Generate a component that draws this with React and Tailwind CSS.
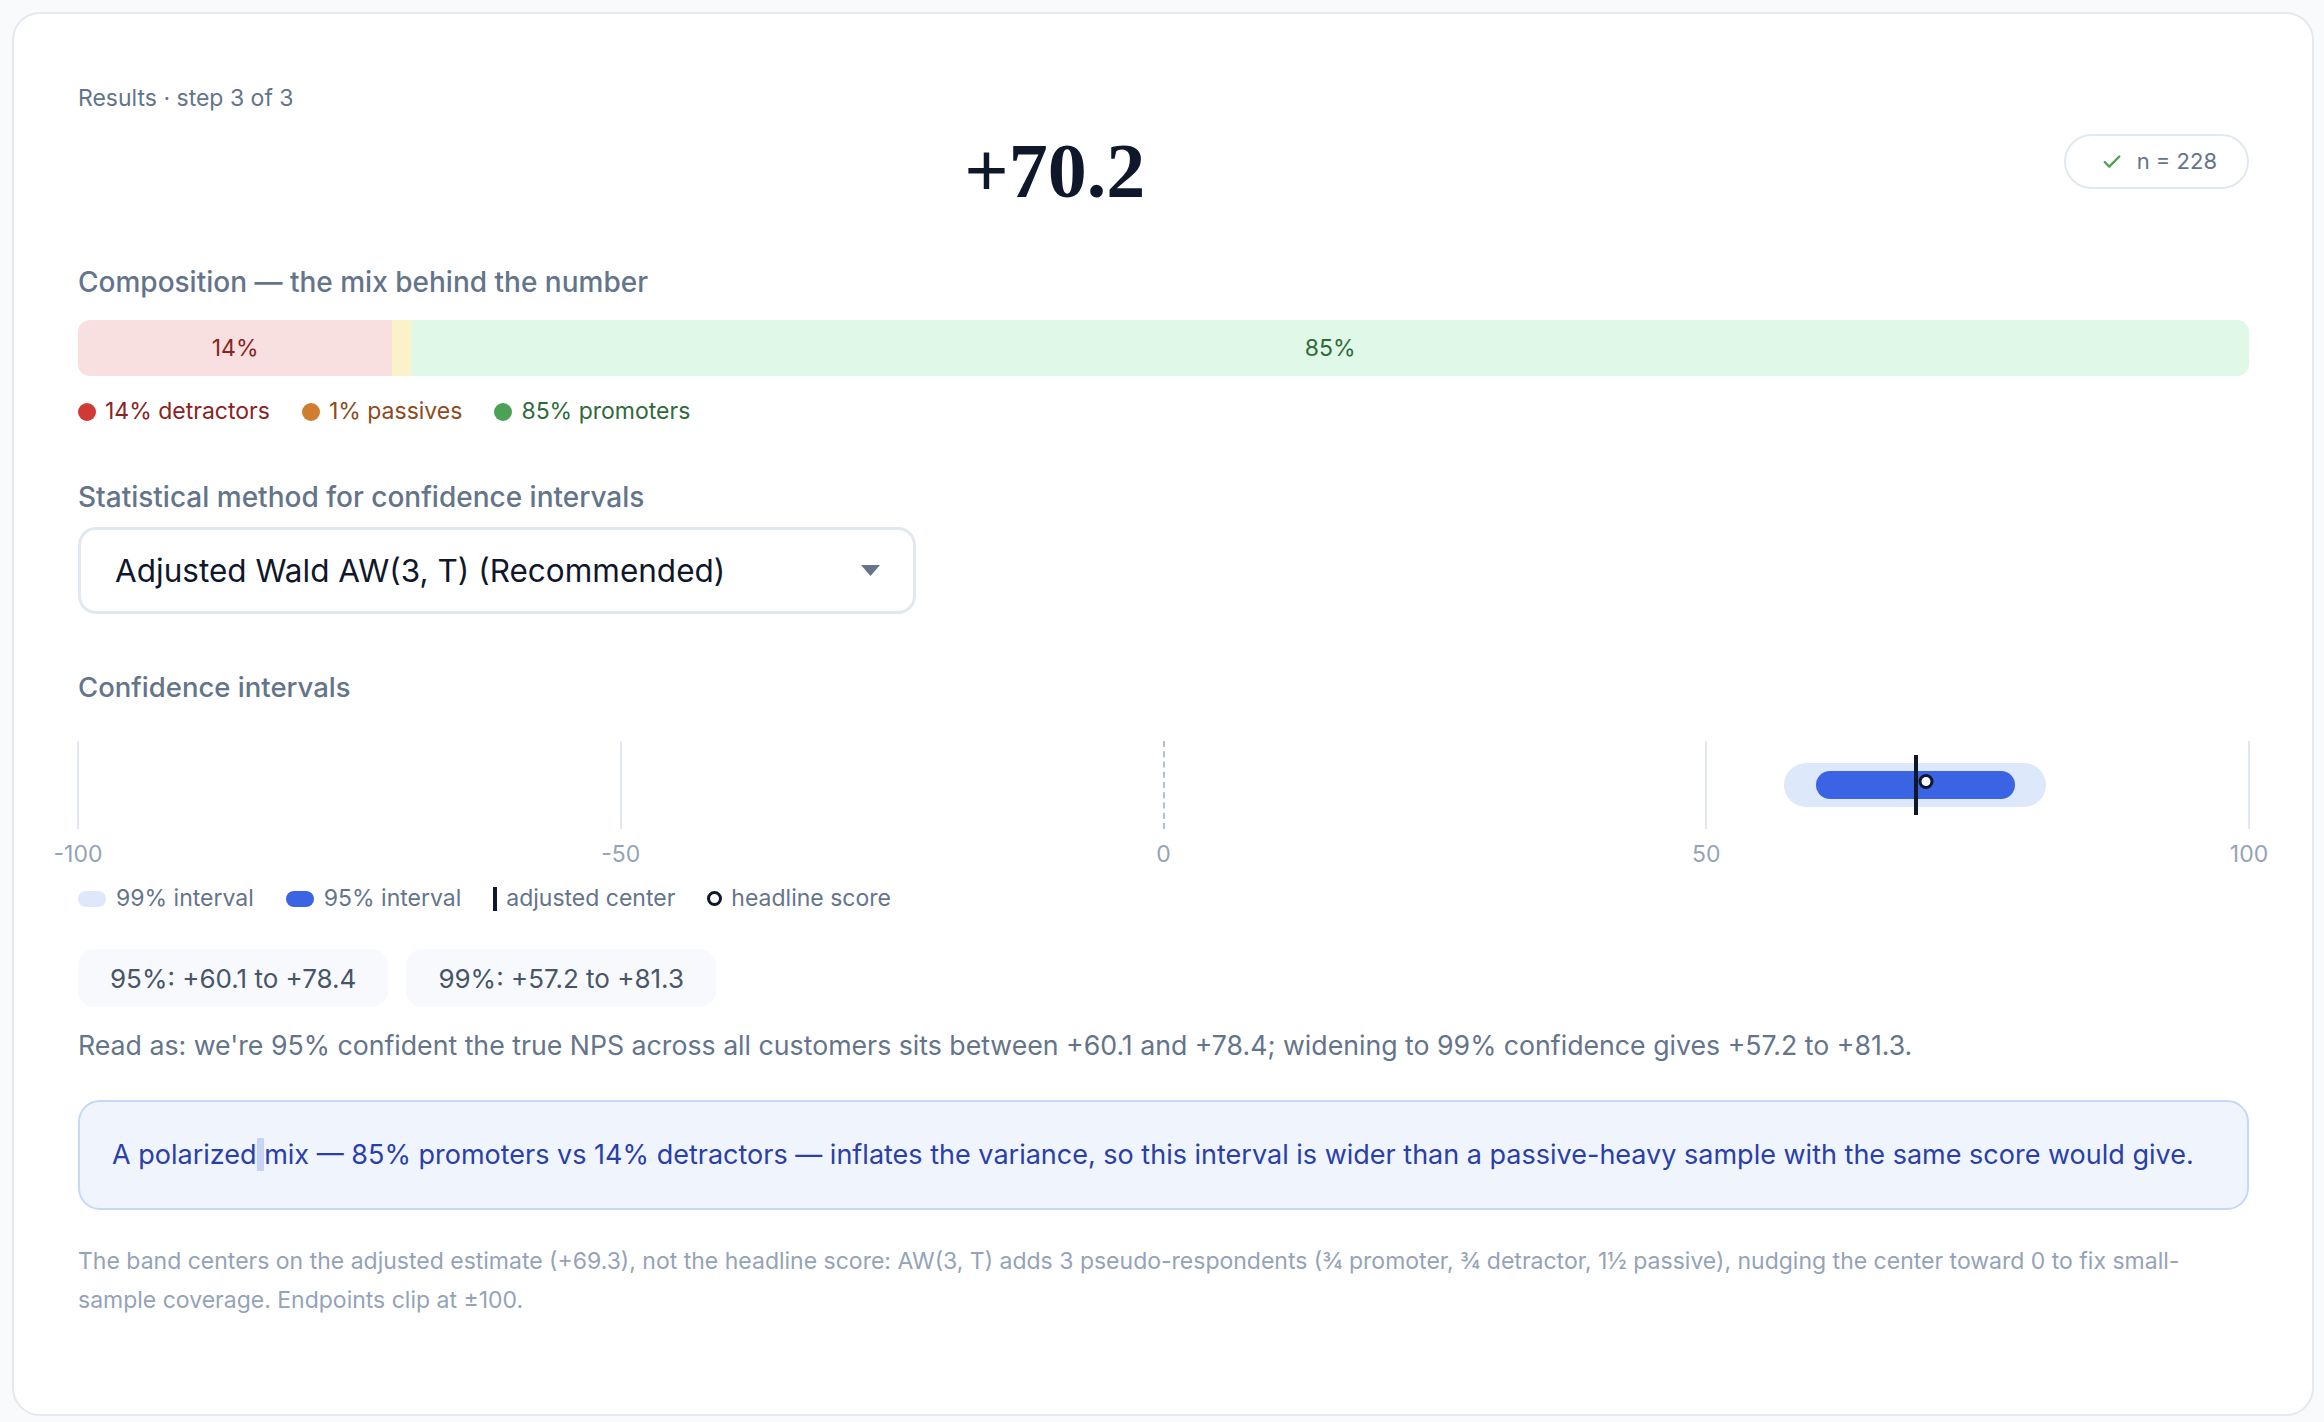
import React from 'react';
import { Check } from 'lucide-react';

const counts = { detractors: 33, passives: 2, promoters: 193 };
const total = counts.detractors + counts.passives + counts.promoters;
const pct = (n) => (n / total) * 100;

// map an NPS value (-100..100) onto the axis, as a percent of its width
const pos = (v) => ((v + 100) / 200) * 100;

const ticks = [-100, -50, 0, 50, 100];

export default function App() {
  const ci95 = [60.1, 78.4];
  const ci99 = [57.2, 81.3];
  const adjusted = 69.3;
  const headline = 70.2;

  return (
    <div className="min-h-screen bg-[#f8fafc] pt-3 pl-3 pr-[10px] font-['Inter',sans-serif]">
      <div className="min-h-[1404px] rounded-[28px] border-2 border-[#e4e8ef] bg-white pl-16 pr-[63px] pt-[68px]">
        {/* Header */}
        <div className="flex items-start gap-8">
          <div className="flex-1">
            <p className="text-[23px] leading-[33px] text-[#64748b]">Results · step 3 of 3</p>
            <div className="mt-[17px] text-center font-['Liberation_Serif',serif] text-[78px] font-bold leading-none text-[#0f172a]">
              +70.2
            </div>
          </div>
          <div className="mt-[52px] flex h-[55px] items-center gap-[14px] rounded-full border-2 border-[#e2e8f0] pl-[35px] pr-[30px]">
            <Check size={22} strokeWidth={2.5} className="text-[#4ba154]" />
            <span className="text-[22px] text-[#64748b]">n = 228</span>
          </div>
        </div>

        {/* Composition */}
        <h3 className="mt-[54px] text-[28px] font-medium leading-9 text-[#64748b]">
          Composition — the mix behind the number
        </h3>
        <div className="mt-5 flex h-14 overflow-hidden rounded-xl">
          <div
            className="flex items-center justify-center bg-[#f9e0e0] text-[23px] text-[#8b2323]"
            style={{ width: `${pct(counts.detractors)}%` }}
          >
            14%
          </div>
          <div className="bg-[#fcf1c9]" style={{ width: `${pct(counts.passives)}%` }} />
          <div
            className="flex items-center justify-center bg-[#e0f8e8] text-[23px] text-[#2f6b3a]"
            style={{ width: `${pct(counts.promoters)}%` }}
          >
            85%
          </div>
        </div>
        <div className="mt-[19px] flex items-center gap-8 text-[23px] leading-[33px]">
          <span className="flex items-center gap-[9px] text-[#8b2323]">
            <span className="h-[18px] w-[18px] rounded-full bg-[#d03a34]" />
            14% detractors
          </span>
          <span className="flex items-center gap-[9px] text-[#8f4a1d]">
            <span className="h-[18px] w-[18px] rounded-full bg-[#cf7d2e]" />
            1% passives
          </span>
          <span className="flex items-center gap-[9px] text-[#2f6b3a]">
            <span className="h-[18px] w-[18px] rounded-full bg-[#4ba154]" />
            85% promoters
          </span>
        </div>

        {/* Method */}
        <h3 className="mt-[51px] text-[28px] font-medium leading-9 text-[#64748b]">
          Statistical method for confidence intervals
        </h3>
        <div className="mt-3 flex h-[87px] w-[838px] items-center justify-between rounded-[18px] border-[3px] border-[#e2e8f0] pl-[34px] pr-[33px]">
          <span className="text-[31.5px] text-[#0f172a]">Adjusted Wald AW(3, T) (Recommended)</span>
          <svg width="19" height="11" viewBox="0 0 19 11">
            <path d="M0 0 H19 L9.5 11 Z" fill="#64748b" />
          </svg>
        </div>

        {/* Confidence intervals */}
        <h3 className="mt-[55px] text-[27.5px] font-medium leading-9 text-[#64748b]">Confidence intervals</h3>
        <div className="relative mt-9 h-[88px]">
          {ticks.map((t) =>
            t === 0 ? (
              <div
                key={t}
                className="absolute top-0 h-full -translate-x-1/2 border-l-2 border-dashed border-[#b4bfd0]"
                style={{ left: `${pos(t)}%` }}
              />
            ) : (
              <div
                key={t}
                className="absolute top-0 h-full w-[2px] -translate-x-1/2 bg-[#e2e8f0]"
                style={{ left: `${pos(t)}%` }}
              />
            )
          )}
          <div
            className="absolute top-[22px] h-[44px] rounded-full bg-[#dde8fb]"
            style={{ left: `${pos(ci99[0])}%`, width: `${pos(ci99[1]) - pos(ci99[0])}%` }}
          />
          <div
            className="absolute top-[30px] h-[28px] rounded-full bg-[#3b64e4]"
            style={{ left: `${pos(ci95[0])}%`, width: `${pos(ci95[1]) - pos(ci95[0])}%` }}
          />
          <div
            className="absolute top-[14px] h-[60px] w-1 -translate-x-1/2 bg-[#0f172a]"
            style={{ left: `${pos(adjusted)}%` }}
          />
          <div
            className="absolute top-[33px] h-[15px] w-[15px] -translate-x-1/2 rounded-full border-[3.5px] border-[#0f172a] bg-white"
            style={{ left: `${pos(headline)}%` }}
          />
        </div>
        <div className="relative mt-2 h-[35px]">
          {ticks.map((t) => (
            <span
              key={t}
              className="absolute top-0 -translate-x-1/2 text-[23px] leading-[35px] text-[#94a3b8]"
              style={{ left: `${pos(t)}%` }}
            >
              {t < 0 ? `-${Math.abs(t)}` : t}
            </span>
          ))}
        </div>
        <div className="mt-[10px] flex items-center gap-8 text-[23px] leading-[33px] text-[#64748b]">
          <span className="flex items-center gap-[10px]">
            <span className="h-4 w-7 rounded-full bg-[#dde8fb]" />
            99% interval
          </span>
          <span className="flex items-center gap-[10px]">
            <span className="h-4 w-7 rounded-full bg-[#3b64e4]" />
            95% interval
          </span>
          <span className="flex items-center gap-[9px]">
            <span className="h-6 w-1 bg-[#0f172a]" />
            adjusted center
          </span>
          <span className="flex items-center gap-[9px]">
            <span className="h-[15px] w-[15px] rounded-full border-[3.5px] border-[#0f172a] bg-white" />
            headline score
          </span>
        </div>

        <div className="mt-[34px] flex gap-[18px]">
          <div className="flex h-[58px] items-center rounded-2xl bg-[#f7f9fc] px-8 text-[26px] text-[#475569]">
            95%: +60.1 to +78.4
          </div>
          <div className="flex h-[58px] items-center rounded-2xl bg-[#f7f9fc] px-8 text-[26px] text-[#475569]">
            99%: +57.2 to +81.3
          </div>
        </div>

        <p className="mt-5 text-[26.7px] leading-9 text-[#64748b]">
          Read as: we're 95% confident the true NPS across all customers sits between +60.1 and +78.4; widening to 99%
          confidence gives +57.2 to +81.3.
        </p>

        <div className="mt-[37px] rounded-[22px] border-2 border-[#c5d9f7] bg-[#eff4fd] px-8 py-8 text-[27px] leading-[42px] text-[#2a3fa8]">
          A polarized<span className="bg-[#c8d3f7]"> </span>mix — 85% promoters vs 14% detractors — inflates the
          variance, so this interval is wider than a passive-heavy sample with the same score would give.
        </div>

        <p className="mt-8 text-[23px] leading-[38.5px] text-[#94a3b8]">
          The band centers on the adjusted estimate (+69.3), not the headline score: AW(3, T) adds 3 pseudo-respondents
          (¾ promoter, ¾ detractor, 1½ passive), nudging the center toward 0 to fix small-sample coverage. Endpoints
          clip at ±100.
        </p>
      </div>
    </div>
  );
}
